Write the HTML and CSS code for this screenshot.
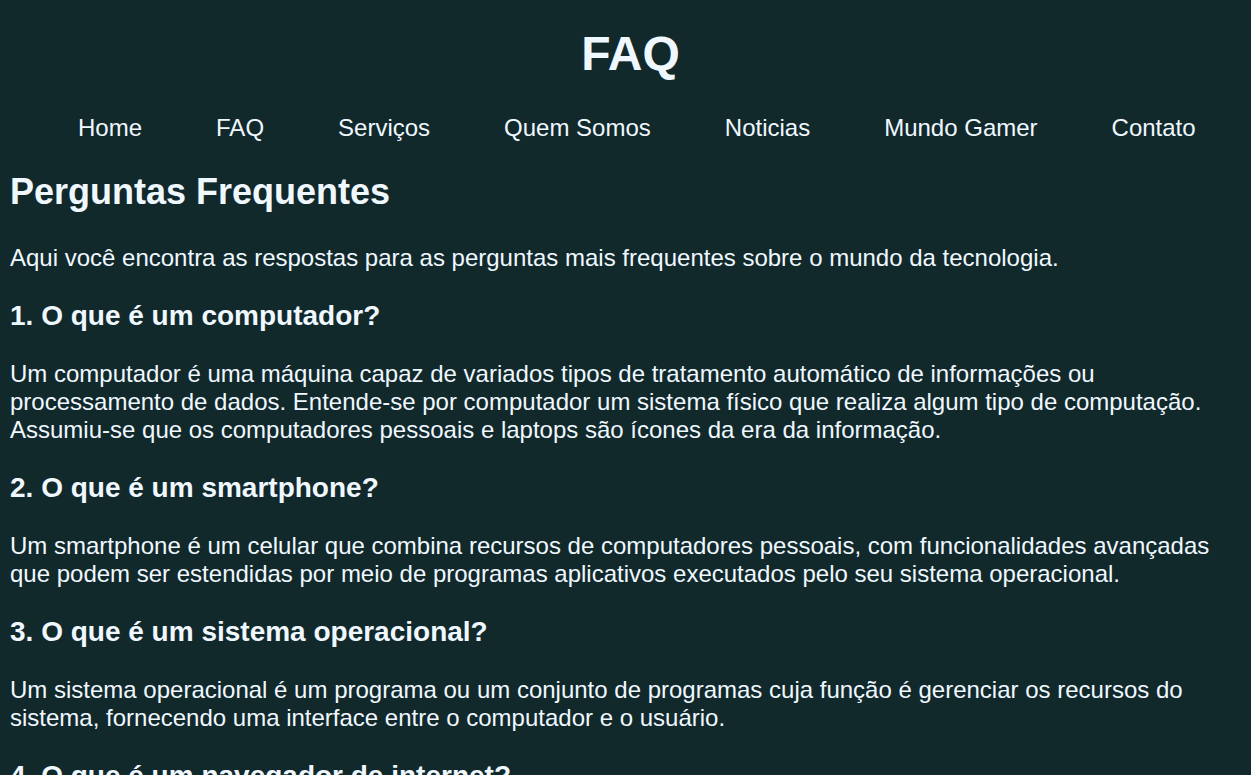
FILE: index.html
```html
<!DOCTYPE html>
<html lang="pt-BR">
<head>
<meta charset="utf-8">
<title>FAQ</title>
<link rel="stylesheet" href="styles.css">
</head>
<body>
<header class="site-header">
  <h1 class="site-title">FAQ</h1>
  <nav class="main-nav">
    <ul class="nav-list">
      <li><a class="nav-link" href="#">Home</a></li>
      <li><a class="nav-link" href="#">FAQ</a></li>
      <li><a class="nav-link" href="#">Serviços</a></li>
      <li><a class="nav-link" href="#">Quem Somos</a></li>
      <li><a class="nav-link" href="#">Noticias</a></li>
      <li><a class="nav-link" href="#">Mundo Gamer</a></li>
      <li><a class="nav-link" href="#">Contato</a></li>
    </ul>
  </nav>
</header>
<main class="faq">
  <h2 class="faq-title">Perguntas Frequentes</h2>
  <p class="faq-text">Aqui você encontra as respostas para as perguntas mais frequentes sobre o mundo da tecnologia.</p>

  <h3 class="faq-question">1. O que é um computador?</h3>
  <p class="faq-text">Um computador é uma máquina capaz de variados tipos de tratamento automático de informações ou processamento de dados. Entende-se por computador um sistema físico que realiza algum tipo de computação. Assumiu-se que os computadores pessoais e laptops são ícones da era da informação.</p>

  <h3 class="faq-question">2. O que é um smartphone?</h3>
  <p class="faq-text">Um smartphone é um celular que combina recursos de computadores pessoais, com funcionalidades avançadas que podem ser estendidas por meio de programas aplicativos executados pelo seu sistema operacional.</p>

  <h3 class="faq-question">3. O que é um sistema operacional?</h3>
  <p class="faq-text">Um sistema operacional é um programa ou um conjunto de programas cuja função é gerenciar os recursos do sistema, fornecendo uma interface entre o computador e o usuário.</p>

  <h3 class="faq-question">4. O que é um navegador de internet?</h3>
  <p class="faq-text">Um navegador de internet é um programa que permite aos usuários acessar e interagir com páginas e conteúdos disponíveis na internet.</p>
</main>
</body>
</html>
```
FILE: styles.css
```css
html {
  background: #12292c;
}

body {
  margin: 8px;
  background: #12292c;
  color: #f0f8ff;
  font-family: "Liberation Sans", Arial, Helvetica, sans-serif;
}

.site-header {
  padding-top: 18px;
}

.site-title {
  margin: 0 0 33px;
  padding-left: 10px;
  font-size: 48px;
  font-weight: bold;
  text-align: center;
}

.nav-list {
  display: flex;
  gap: 74px;
  list-style: none;
  margin: 0;
  padding: 0 0 0 70px;
}

.nav-link {
  color: #f0f8ff;
  text-decoration: none;
  font-size: 24px;
}

.faq {
  padding-left: 2px;
}

.faq-title {
  font-size: 36px;
  margin: 29px 0 31px;
}

.faq-question {
  font-size: 28px;
  margin: 28px 0;
}

.faq-text {
  font-size: 24px;
  margin: 24px 0;
}
```
